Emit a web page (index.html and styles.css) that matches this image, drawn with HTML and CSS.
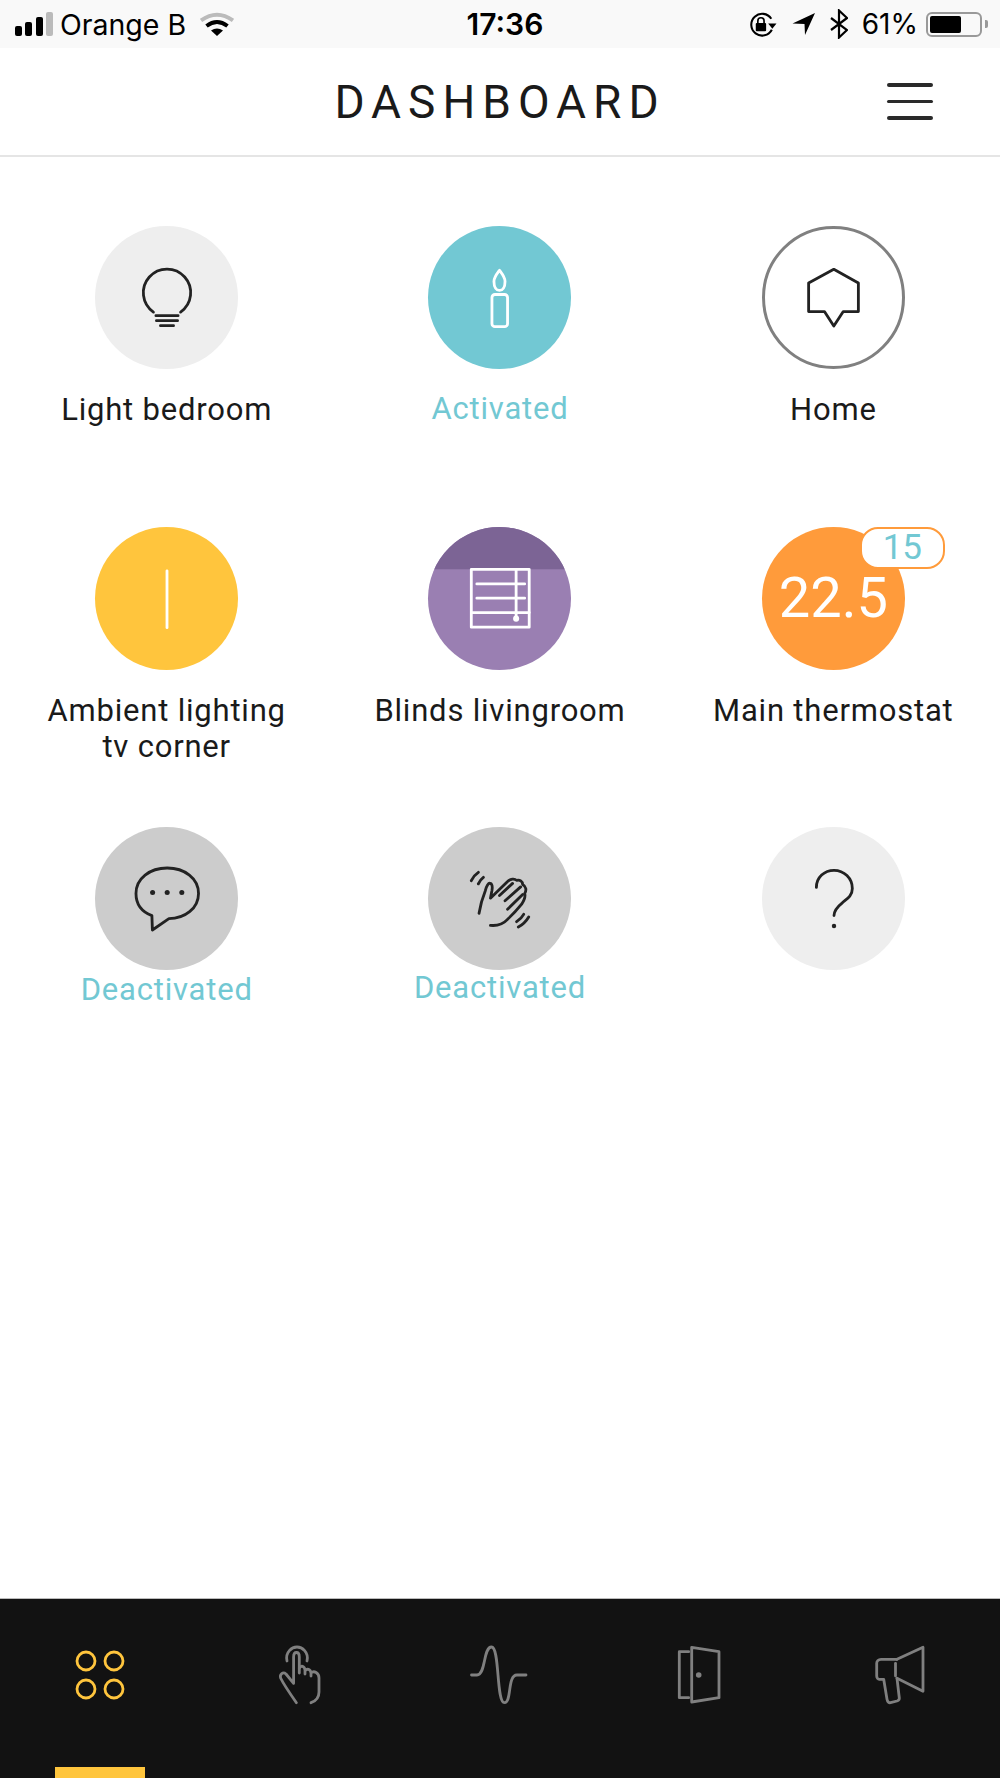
FILE: index.html
```html
<!DOCTYPE html>
<html lang="en">
<head>
    <meta charset="UTF-8">
    <meta name="viewport" content="width=device-width, initial-scale=1.0">
    <title>Dashboard</title>
    <link rel="stylesheet" href="styles.css">
</head>
<body>
<div class="app">

    <!-- Status bar -->
    <div class="status">
        <div class="status-left">
            <svg class="sig" width="40" height="26" viewBox="0 0 40 26">
                <rect x="1" y="15" width="7" height="10" rx="2"/>
                <rect x="11" y="11" width="7" height="14" rx="2"/>
                <rect x="22" y="6" width="7" height="19" rx="2"/>
                <rect class="off" x="32" y="1" width="7" height="24" rx="2"/>
            </svg>
            <span class="carrier">Orange B</span>
            <svg class="wifi" width="34" height="24" viewBox="0 0 34 24">
                <path class="wifi-off" d="M1 8.500Q17 -3 33 8.500"/>
                <path class="wifi-on" d="M6.500 14Q17 6 27.500 14"/>
                <path d="M11 18.500Q17 14.500 23 18.500L17 24Z"/>
            </svg>
        </div>
        <div class="time">17:36</div>
        <div class="status-right">
            <svg width="29" height="25" viewBox="0 0 28 24">
                <path class="st-line" d="M23 17A10.500 10.500 0 1 1 22.500 6.500"/>
                <path d="M27.500 11L19.500 11L23.500 16Z"/>
                <rect x="7.500" y="10.500" width="10" height="8" rx="1"/>
                <path class="st-thin" d="M9.500 10.500V8.500a3 3 0 0 1 6 0V10.500"/>
            </svg>
            <svg class="st-arrow" width="24" height="22" viewBox="0 0 24 22">
                <path d="M23 0L0.500 10.500L12.500 11L13 22Z"/>
            </svg>
            <svg class="st-bt" width="18" height="30" viewBox="0 0 18 30">
                <path class="st-thin2" d="M1 9L17 21L9 28.500V1.500L17 9L1 21"/>
            </svg>
            <span class="batt-text">61%</span>
            <div class="batt"><div class="batt-fill"></div></div>
            <div class="batt-nub"></div>
        </div>
    </div>

    <!-- Header -->
    <header class="top">
        <h1>DASHBOARD</h1>
        <div class="burger"><i></i><i></i><i></i></div>
    </header>

    <!-- Devices -->
    <main class="grid">
        <div class="cell">
            <div class="disc disc-light">
                <svg class="ico dark" viewBox="0 0 142 142">
                    <path d="M58 85.500A23.500 23.500 0 1 1 85 85.500"/>
                    <path d="M60.500 89H82.500M61 94H82M65 99H78"/>
                </svg>
            </div>
            <div class="label">Light bedroom</div>
        </div>
        <div class="cell">
            <div class="disc disc-teal">
                <svg class="ico white" viewBox="0 0 142 142">
                    <path d="M71 44C68 48 65.500 51 65.500 55C65.500 61 68 64 71 64C74 64 76.500 61 76.500 55C76.500 51 74 48 71 44Z"/>
                    <rect x="63.500" y="68" width="15.500" height="32" rx="3"/>
                </svg>
            </div>
            <div class="label label-on">Activated</div>
        </div>
        <div class="cell">
            <div class="disc disc-ring">
                <svg class="ico dark" viewBox="0 0 142 142">
                    <path d="M71.300 43L46.300 56.700V85H62L71.300 99.300L80.700 85H95.700V56.700Z"/>
                </svg>
            </div>
            <div class="label">Home</div>
        </div>

        <div class="cell">
            <div class="disc disc-yellow">
                <svg class="ico white" viewBox="0 0 142 142">
                    <path d="M71.500 43.500V100"/>
                </svg>
            </div>
            <div class="label">Ambient lighting<br>tv corner</div>
        </div>
        <div class="cell">
            <div class="disc disc-purple">
                <svg class="ico white" viewBox="0 0 142 142">
                    <rect class="band" x="0" y="0" width="142" height="42"/>
                    <rect x="43" y="42" width="57.500" height="57.500"/>
                    <path d="M48.500 56.500H96M48.500 70.700H96M43 85H100.500M87.500 42V91"/>
                    <circle class="dot-white" cx="87.500" cy="91" r="3"/>
                </svg>
            </div>
            <div class="label">Blinds livingroom</div>
        </div>
        <div class="cell">
            <div class="disc-wrap">
                <div class="disc disc-orange">22.5</div>
                <div class="badge">15</div>
            </div>
            <div class="label">Main thermostat</div>
        </div>

        <div class="cell">
            <div class="disc disc-grey">
                <svg class="ico dark" viewBox="0 0 142 142">
                    <path d="M56.500 88C46 84 40.700 76 40.700 66C40.700 51 54.500 40.700 71.700 40.700C89 40.700 102.800 51 102.800 66C102.800 81 89 91 73.400 91L57 102.300Z"/>
                    <circle class="dot-dark" cx="57.200" cy="65" r="2.500"/>
                    <circle class="dot-dark" cx="71.700" cy="65" r="2.500"/>
                    <circle class="dot-dark" cx="86.200" cy="65" r="2.500"/>
                </svg>
            </div>
            <div class="label label-on label-tight">Deactivated</div>
        </div>
        <div class="cell">
            <div class="disc disc-grey">
                <svg class="ico dark" viewBox="0 0 142 142">
                    <path d="M50.700 85.700C52 77 55 68 57 63C58 59 60 55 62 56C64.500 57 64 60 63.500 63L62 70.700L78 55C82 51 86 51 88 53C91 52 94 54 94 57C97.500 59 98 63 96 66C97 69 96 72 93 76.700C88 83 84 87 79 91.700C75 96 70 98.500 62 97.700"/>
                    <path d="M71 68L84 56M76.500 73.300L92 59.500M79 81.700L94 67"/>
                    <path d="M43 53.300C44.500 50 47 47 50 45M50 56.500C51 54 53 51.500 55 50M88 94C91 92 93.500 89.500 95 86.700M89.700 99.300C94 97 97.500 93.500 100 89.300"/>
                </svg>
            </div>
            <div class="label label-on label-tighter">Deactivated</div>
        </div>
        <div class="cell">
            <div class="disc disc-light">
                <svg class="ico dark" viewBox="0 0 142 142">
                    <path d="M54 60C54 50 62 43 71.500 43C81.500 43 89.700 51 89.700 61C89.700 68 85 71 80 75C75 79 71.500 83 71.500 88"/>
                    <circle class="dot-dark" cx="71.500" cy="98.300" r="2.200"/>
                </svg>
            </div>
        </div>
    </main>

    <!-- Bottom tabs -->
    <nav class="tabs">
        <div class="tab tab-active">
            <svg class="tab-ico" viewBox="0 0 60 60">
                <circle cx="16" cy="16" r="9"/>
                <circle cx="44" cy="16" r="9"/>
                <circle cx="16" cy="44" r="9"/>
                <circle cx="44" cy="44" r="9"/>
            </svg>
            <span class="tab-mark"></span>
        </div>
        <div class="tab">
            <svg class="tab-ico" viewBox="0 0 60 60">
                <path d="M17 16C15 7 22 2 27 2C32 2 39 7 37 16"/>
                <path d="M26.400 57.700C21 50 14 40 10.600 33C9.500 29 13 26.500 16 29L23.600 38.300V12C23.600 6 29.300 6 29.300 12V28"/>
                <path d="M29.300 23C31 20 34.500 21 35 25V29M35 26C37 23 40.500 24 41 28V31M41 28C44 25 49 28 49 33V47C49 52 46 56 41 57.700"/>
            </svg>
            <span class="tab-mark-none"></span>
        </div>
        <div class="tab">
            <svg class="tab-ico" viewBox="0 0 60 60">
                <path d="M1.500 30H7C16 30 13 2 21.500 2C30 2 26 57.700 34.500 57.700C42 57.700 37 30 47 30H56"/>
            </svg>
            <span class="tab-mark-none"></span>
        </div>
        <div class="tab">
            <svg class="tab-ico" viewBox="0 0 60 60">
                <path d="M18.700 6.700H9.300V52.700H18.700"/>
                <path d="M21.700 2.300L49 6.700V52.700L21.700 57Z"/>
                <circle class="tab-dot" cx="28.700" cy="30" r="2.800"/>
            </svg>
            <span class="tab-mark-none"></span>
        </div>
        <div class="tab">
            <svg class="tab-ico" viewBox="0 0 60 60">
                <path d="M27 14.300L53 2.300V46.300L27 33.300"/>
                <path d="M27 14.300H11C8.500 14.300 6.700 16 6.700 18.300V31C6.700 33 8 34.300 9.300 34.300H13.700L17 54.300C17.500 57 19 58 20.500 57.700L27 56C29 55.300 29.500 54.500 29.300 53L27 33.300"/>
                <path d="M25.500 18.300V31"/>
            </svg>
            <span class="tab-mark-none"></span>
        </div>
    </nav>
</div>
</body>
</html>
```

FILE: styles.css
```css
html, body {
    margin: 0;
    padding: 0;
    background: #fff;
}
.app {
    width: 1000px;
    height: 1778px;
    display: flex;
    flex-direction: column;
    overflow: hidden;
    font-family: Roboto, "Liberation Sans", sans-serif;
    color: #1a1a1a;
}

/* status bar */
.status {
    height: 48px;
    background: #f9f9f9;
    display: grid;
    grid-template-columns: 1fr auto 1fr;
    align-items: center;
    padding: 0 12px 0 14px;
    font-family: Inter, "Liberation Sans", sans-serif;
    font-size: 28px;
    color: #000;
}
.status-left,
.status-right {
    display: flex;
    align-items: center;
}
.status-right {
    justify-content: flex-end;
}
.carrier {
    margin-left: 6px;
    font-size: 28.500px;
}
.wifi {
    margin-left: 14px;
}
.wifi-off {
    fill: none;
    stroke: #bbb;
    stroke-width: 4;
}
.wifi-on {
    fill: none;
    stroke: #000;
    stroke-width: 4;
}
.sig .off {
    fill: #bbb;
}
.time {
    margin-left: 8px;
    font-size: 30px;
    font-weight: 600;
}
.st-line {
    fill: none;
    stroke: #000;
    stroke-width: 2;
}
.st-thin {
    fill: none;
    stroke: #000;
    stroke-width: 1.600;
}
.st-thin2 {
    fill: none;
    stroke: #000;
    stroke-width: 2.200;
}
.st-arrow {
    margin-left: 15px;
}
.st-bt {
    margin-left: 14px;
}
.batt-text {
    margin-left: 14px;
}
.batt {
    margin-left: 8px;
    width: 56px;
    height: 25px;
    box-sizing: border-box;
    border: 2px solid #999;
    border-radius: 6px;
    padding: 2px;
}
.batt-fill {
    width: 31px;
    height: 100%;
    background: #000;
    border-radius: 2px;
}
.batt-nub {
    width: 3px;
    height: 8px;
    margin-left: 3px;
    background: #999;
    border-radius: 0 2px 2px 0;
}

/* header */
.top {
    height: 107px;
    border-bottom: 2px solid #e5e5e5;
    display: grid;
    grid-template-columns: 1fr auto 1fr;
    align-items: center;
}
.top h1 {
    grid-column: 2;
    margin: 0;
    font-size: 46px;
    font-weight: 400;
    letter-spacing: 7px;
}
.burger {
    grid-column: 3;
    justify-self: end;
    margin-right: 67px;
    width: 46px;
    display: flex;
    flex-direction: column;
    gap: 13px;
}
.burger i {
    display: block;
    height: 3.500px;
    border-radius: 2px;
    background: #2a2a2a;
}

/* device grid */
.grid {
    flex: 1;
    display: grid;
    grid-template-columns: repeat(3, 1fr);
    grid-auto-rows: 300.500px;
    padding-top: 69px;
}
.cell {
    display: flex;
    flex-direction: column;
    align-items: center;
}
.disc {
    width: 143px;
    height: 143px;
    border-radius: 50%;
    overflow: hidden;
    box-sizing: border-box;
    flex: none;
}
.disc-light {
    background: #eee;
}
.disc-grey {
    background: #ccc;
}
.disc-teal {
    background: #72c8d3;
}
.disc-yellow {
    background: #ffc53d;
}
.disc-purple {
    background: #9a7fb2;
}
.disc-ring {
    border: 3px solid #808080;
}
.disc-ring .ico {
    margin: -3px;
}
.disc-orange {
    background: #ff9b3b;
    color: #fff;
    font-size: 56px;
    font-weight: 400;
    display: flex;
    align-items: center;
    justify-content: center;
}
.disc-wrap {
    position: relative;
    width: 143px;
    height: 143px;
}
.badge {
    position: absolute;
    left: 98px;
    top: 0;
    width: 85px;
    height: 42px;
    box-sizing: border-box;
    border: 2.500px solid #ff9b3b;
    border-radius: 18px;
    background: #fff;
    color: #72c8d3;
    font-size: 35px;
    font-weight: 400;
    line-height: 37px;
    text-align: center;
}
.ico {
    display: block;
    width: 143px;
    height: 143px;
    fill: none;
    stroke-linecap: round;
    stroke-linejoin: round;
}
.ico.dark {
    stroke: #222;
    stroke-width: 2.800;
}
.ico.white {
    stroke: #fff;
    stroke-width: 2.800;
}
.ico .band {
    fill: #7c6495;
    stroke: none;
}
.ico .dot-dark {
    fill: #222;
    stroke: none;
}
.ico .dot-white {
    fill: #fff;
    stroke: none;
}
.label {
    margin-top: 23px;
    font-size: 31px;
    line-height: 36px;
    letter-spacing: 0.800px;
    text-align: center;
}
.label-on {
    margin-top: 22px;
    color: #72c8d3;
}
.label-on.label-tight {
    margin-top: 2px;
}
.label-on.label-tighter {
    margin-top: 0;
}

/* bottom tabs */
.tabs {
    height: 179px;
    flex: none;
    background: #121212;
    border-top: 1px solid #bbb;
    display: flex;
}
.tab {
    flex: 1;
    display: flex;
    flex-direction: column;
    align-items: center;
    justify-content: space-between;
    padding-top: 46px;
}
.tab-ico {
    display: block;
    width: 60px;
    height: 60px;
    fill: none;
    stroke: #808080;
    stroke-width: 2.800;
    stroke-linecap: round;
    stroke-linejoin: round;
}
.tab-active .tab-ico {
    stroke: #ffc53d;
}
.tab-ico .tab-dot {
    fill: #808080;
    stroke: none;
}
.tab-mark {
    width: 90px;
    height: 11px;
    background: #ffc53d;
}
.tab-mark-none {
    height: 11px;
}
```
